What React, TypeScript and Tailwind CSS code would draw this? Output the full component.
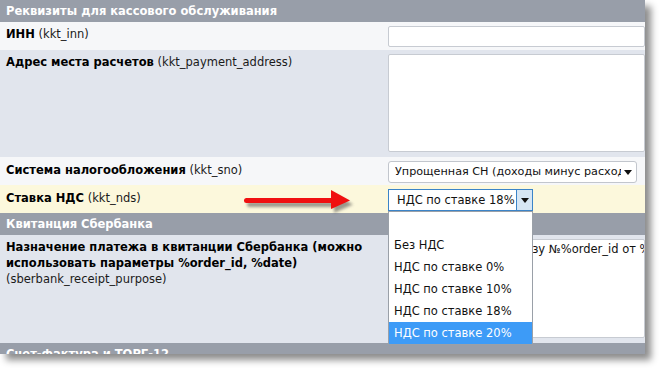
import React from "react";

const font = "font-['DejaVu_Sans','Verdana',sans-serif]";

function SectionHeader({ title }: { title: string }) {
  return (
    <div className="h-[22px] shrink-0 bg-[#989ea9] pl-[6px] font-bold leading-[22px] text-white">
      {title}
    </div>
  );
}

function Label({
  bold,
  code,
  className = "",
}: {
  bold: React.ReactNode;
  code: string;
  className?: string;
}) {
  return (
    <div className={`w-[384px] shrink-0 pl-[6px] leading-[16px] ${className}`}>
      <span className="font-bold text-black">{bold}</span>{" "}
      <span className="text-[#1a1a1a]">{code}</span>
    </div>
  );
}

function Caret() {
  return (
    <svg width="8" height="5" viewBox="0 0 8 5" aria-hidden>
      <path d="M0 0h8L4 5z" fill="#111" />
    </svg>
  );
}

function RedArrow() {
  return (
    <svg
      className="pointer-events-none absolute left-[240px] top-[186px]"
      width="122"
      height="32"
      viewBox="0 0 122 32"
      aria-hidden
    >
      <defs>
        <filter id="blur" x="-10%" y="-40%" width="120%" height="180%">
          <feGaussianBlur stdDeviation="1.4" />
        </filter>
      </defs>
      <g transform="translate(3 4)" fill="#4a4a4a" opacity="0.55" filter="url(#blur)">
        <rect x="4" y="12" width="90" height="5" rx="2.5" />
        <path d="M91 4 L110 14.5 L91 23 Z" />
      </g>
      <g fill="#f01010">
        <rect x="4" y="12" width="90" height="5" rx="2.5" />
        <path d="M91 4 L110 14.5 L91 23 Z" />
      </g>
    </svg>
  );
}

const vatOptions = [
  "",
  "Без НДС",
  "НДС по ставке 0%",
  "НДС по ставке 10%",
  "НДС по ставке 18%",
  "НДС по ставке 20%",
];

export default function App() {
  return (
    <div className={`min-h-screen bg-white text-[11.5px] ${font}`}>
      <div className="relative flex h-[354px] w-[645px] flex-col overflow-hidden shadow-[6px_6px_7px_rgba(0,0,0,0.45)]">
        <SectionHeader title="Реквизиты для кассового обслуживания" />

        {/* ИНН */}
        <div className="flex h-[28px] shrink-0 bg-[#f6f7f9]">
          <Label bold="ИНН" code="(kkt_inn)" className="pt-[4px]" />
          <div className="pl-[4px] pt-[4px]">
            <div className="h-[21px] w-[257px] rounded-[2px] border border-[#c7cbd2] bg-white" />
          </div>
        </div>

        {/* Адрес */}
        <div className="flex h-[107px] shrink-0 bg-[#e1e5ed]">
          <Label bold="Адрес места расчетов" code="(kkt_payment_address)" className="pt-[4px]" />
          <div className="pl-[4px] pt-[4px]">
            <div className="h-[98px] w-[257px] rounded-[2px] border border-[#c7cbd2] bg-white" />
          </div>
        </div>

        {/* СНО */}
        <div className="flex h-[28px] shrink-0 bg-[#f6f7f9]">
          <Label bold="Система налогообложения" code="(kkt_sno)" className="pt-[5px]" />
          <div className="pl-[4px] pt-[4px]">
            <div className="flex h-[22px] w-[249px] items-center rounded-[3px] border border-[#c2c6cd] bg-white pl-[6px] pr-[4px]">
              <span className="flex-1 overflow-hidden whitespace-nowrap text-[11.2px] text-[#111]">
                Упрощенная СН (доходы минус расходы)
              </span>
              <span className="ml-[3px] flex items-center">
                <Caret />
              </span>
            </div>
          </div>
        </div>

        {/* НДС */}
        <div className="flex h-[28px] shrink-0 bg-[#fcf8dc]">
          <Label bold="Ставка НДС" code="(kkt_nds)" className="pt-[5px]" />
          <div className="pl-[4px] pt-[4px]">
            <div className="relative z-10 flex h-[22px] w-[145px] border border-[#3b84c8] bg-white">
              <span className="flex-1 overflow-hidden whitespace-nowrap pl-[8px] leading-[20px] text-[#111]">
                НДС по ставке 18%
              </span>
              <span className="flex w-[16px] shrink-0 items-center justify-center border-l border-[#3b84c8] bg-[#d6e6f4]">
                <Caret />
              </span>
              <ul className="absolute left-[-1px] top-[21px] w-[145px] border border-[#9aa0a8] bg-white">
                {vatOptions.map((o, i) => (
                  <li
                    key={i}
                    className={`h-[22px] whitespace-nowrap pl-[5px] leading-[22px] ${
                      i === vatOptions.length - 1 ? "bg-[#3d9bf7] text-white" : "text-[#111]"
                    }`}
                  >
                    {o}
                  </li>
                ))}
              </ul>
            </div>
          </div>
        </div>

        <SectionHeader title="Квитанция Сбербанка" />

        {/* Назначение платежа */}
        <div className="flex h-[108px] shrink-0 bg-[#e1e5ed]">
          <div className="w-[384px] shrink-0 pl-[6px] pt-[4px] leading-[16px]">
            <span className="font-bold text-black">
              Назначение платежа в квитанции Сбербанка (можно
              <br />
              использовать параметры %order_id, %date)
            </span>
            <br />
            <span className="text-[#1a1a1a]">(sberbank_receipt_purpose)</span>
          </div>
          <div className="pl-[4px] pt-[4px]">
            <div className="h-[99px] w-[257px] overflow-hidden whitespace-nowrap rounded-[2px] border border-[#c7cbd2] bg-white pl-[5px] pt-[1px] leading-[16px] text-[#111]">
              Оплата услуги по заказу №%order_id от %date
            </div>
          </div>
        </div>

        <SectionHeader title="Счет-фактура и ТОРГ-12" />

        <RedArrow />
      </div>
    </div>
  );
}
